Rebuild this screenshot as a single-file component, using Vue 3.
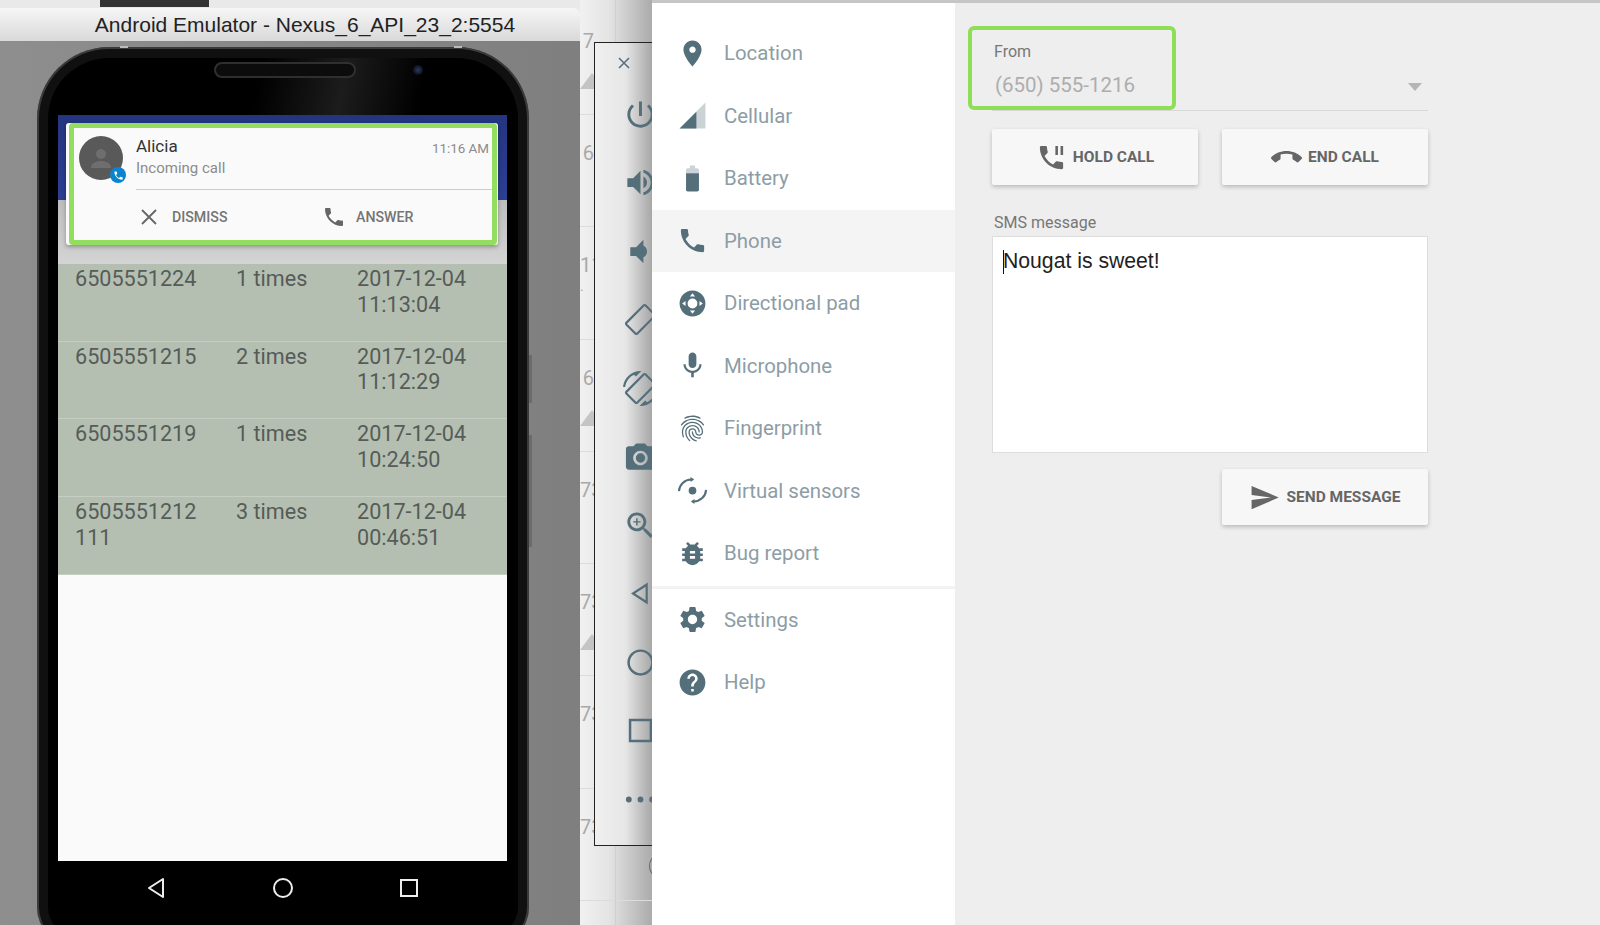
<script setup>
const phonePath = 'M6.62 10.79c1.44 2.83 3.76 5.14 6.59 6.59l2.2-2.2c.27-.27.67-.36 1.02-.24 1.12.37 2.33.57 3.57.57.55 0 1 .45 1 1V20c0 .55-.45 1-1 1-9.39 0-17-7.61-17-17 0-.55.45-1 1-1h3.5c.55 0 1 .45 1 1 0 1.25.2 2.45.57 3.57.11.35.03.74-.25 1.02l-2.2 2.2z'

const navItems = [
  { label: 'Location', d: 'M12 2C8.13 2 5 5.13 5 9c0 5.25 7 13 7 13s7-7.75 7-13c0-3.87-3.13-7-7-7zm0 9.5c-1.38 0-2.5-1.12-2.5-2.5s1.12-2.5 2.5-2.5 2.5 1.12 2.5 2.5-1.12 2.5-2.5 2.5z' },
  { label: 'Cellular', d: 'M15 9L2 22h13z', ghost: 'M2 22h20V2z' },
  { label: 'Battery', d: 'M7 8h10v12.67c0 .73-.6 1.33-1.33 1.33H8.33C7.6 22 7 21.4 7 20.67z', ghost: 'M15.67 4H14V2h-4v2H8.33C7.6 4 7 4.6 7 5.33V8h10V5.33C17 4.6 16.4 4 15.67 4z' },
  { label: 'Phone', d: phonePath, active: true },
  { label: 'Directional pad', d: 'M12 2a10 10 0 1 0 0 20 10 10 0 0 0 0-20zm0 6.2a3.8 3.8 0 1 1 0 7.6 3.8 3.8 0 0 1 0-7.6zM12 4l2 2.6h-4zM12 20l-2-2.6h4zM4 12l2.6-2v4zM20 12l-2.6 2v-4z' },
  { label: 'Microphone', d: 'M12 14c1.66 0 3-1.34 3-3V5c0-1.66-1.34-3-3-3S9 3.34 9 5v6c0 1.66 1.34 3 3 3zm5.3-3c0 3-2.54 5.1-5.3 5.1S6.7 14 6.7 11H5c0 3.41 2.72 6.23 6 6.72V21h2v-3.28c3.28-.48 6-3.3 6-6.72h-1.7z' },
  { label: 'Fingerprint', d: 'M17.81 4.47c-.08 0-.16-.02-.23-.06C15.66 3.42 14 3 12.01 3c-1.98 0-3.86.47-5.57 1.41-.24.13-.54.04-.68-.2-.13-.24-.04-.55.2-.68C7.82 2.52 9.86 2 12.01 2c2.13 0 3.99.47 6.03 1.52.25.13.34.43.21.67-.09.18-.26.28-.44.28zM3.5 9.72c-.1 0-.2-.03-.29-.09-.23-.16-.28-.47-.12-.7.99-1.4 2.25-2.5 3.75-3.27C9.98 4.04 14 4.03 17.15 5.65c1.5.77 2.76 1.86 3.75 3.25.16.22.11.54-.12.7-.23.16-.54.11-.7-.12-.9-1.26-2.04-2.25-3.39-2.94-2.87-1.47-6.54-1.47-9.4.01-1.36.7-2.5 1.7-3.4 2.96-.08.14-.23.21-.39.21zm6.25 12.07c-.13 0-.26-.05-.35-.15-.87-.87-1.34-1.43-2.01-2.64-.69-1.23-1.05-2.73-1.05-4.34 0-2.97 2.54-5.39 5.66-5.39s5.66 2.42 5.66 5.39c0 .28-.22.5-.5.5s-.5-.22-.5-.5c0-2.42-2.09-4.39-4.66-4.39-2.57 0-4.66 1.97-4.66 4.39 0 1.44.32 2.77.93 3.85.64 1.15 1.08 1.64 1.85 2.42.19.2.19.51 0 .71-.11.1-.24.15-.37.15zm7.17-1.85c-1.19 0-2.24-.3-3.1-.89-1.49-1.01-2.38-2.65-2.38-4.39 0-.28.22-.5.5-.5s.5.22.5.5c0 1.41.72 2.74 1.94 3.56.71.48 1.54.71 2.54.71.24 0 .64-.03 1.04-.1.27-.05.53.13.58.41.05.27-.13.53-.41.58-.57.11-1.07.12-1.21.12zM14.91 22c-.04 0-.09-.01-.13-.02-1.59-.44-2.63-1.03-3.72-2.1-1.4-1.39-2.17-3.24-2.17-5.22 0-1.62 1.38-2.94 3.08-2.94 1.7 0 3.08 1.32 3.08 2.94 0 1.07.93 1.94 2.08 1.94s2.08-.87 2.08-1.94c0-3.77-3.25-6.83-7.25-6.83-2.84 0-5.44 1.58-6.61 4.03-.39.81-.59 1.76-.59 2.8 0 .78.07 2.01.67 3.61.1.26-.03.55-.29.64-.26.1-.55-.04-.64-.29-.49-1.31-.73-2.61-.73-3.96 0-1.2.23-2.29.68-3.24 1.33-2.79 4.28-4.6 7.51-4.6 4.55 0 8.25 3.51 8.25 7.83 0 1.62-1.38 2.94-3.08 2.94s-3.08-1.32-3.08-2.94c0-1.07-.93-1.94-2.08-1.94s-2.08.87-2.08 1.94c0 1.71.66 3.31 1.87 4.51.95.94 1.86 1.46 3.27 1.85.27.07.42.35.35.61-.05.23-.26.38-.47.38z' },
  { label: 'Virtual sensors', d: 'M12 9a3 3 0 1 1 0 6 3 3 0 0 1 0-6zM10.500 1.500l2.800 2-2.800 2zM13.500 22.500l-2.800-2 2.800-2z', strokes: 'M1.500 12.500A9.500 9.500 0 0 1 11 3.500M22.500 11.500A9.500 9.500 0 0 1 13 20.500' },
  { label: 'Bug report', d: 'M20 8h-2.810c-.45-.78-1.070-1.450-1.820-1.960L17 4.410 15.590 3l-2.170 2.170C12.960 5.060 12.490 5 12 5c-.49 0-.96.060-1.410.170L8.410 3 7 4.410l1.620 1.630C7.880 6.550 7.260 7.220 6.810 8H4v2h2.090c-.05.33-.09.66-.09 1v1H4v2h2v1c0 .34.040.67.090 1H4v2h2.810c1.040 1.790 2.970 3 5.190 3s4.150-1.210 5.190-3H20v-2h-2.090c.05-.33.090-.66.090-1v-1h2v-2h-2v-1c0-.34-.04-.67-.09-1H20V8zm-6 8h-4v-2h4v2zm0-4h-4v-2h4v2z' }
]

const navBottom = [
  { label: 'Settings', d: 'M19.140 12.940c.04-.3.060-.61.060-.94 0-.32-.02-.64-.07-.94l2.030-1.580c.18-.14.23-.41.120-.61l-1.920-3.320c-.12-.22-.37-.29-.59-.22l-2.390.96c-.5-.38-1.030-.7-1.620-.94l-.36-2.540c-.04-.24-.24-.41-.48-.41h-3.840c-.24 0-.43.17-.47.41l-.36 2.540c-.59.24-1.130.57-1.620.94l-2.390-.96c-.22-.08-.47 0-.59.22L2.740 8.870c-.12.21-.08.47.12.61l2.030 1.580c-.05.3-.09.63-.09.94s.02.64.07.94l-2.030 1.580c-.18.14-.23.41-.12.61l1.920 3.320c.12.22.37.29.59.22l2.390-.96c.5.38 1.030.7 1.620.94l.36 2.540c.05.24.24.41.48.41h3.840c.24 0 .44-.17.47-.41l.36-2.540c.59-.24 1.130-.56 1.620-.94l2.390.96c.22.08.47 0 .59-.22l1.920-3.320c.12-.22.07-.47-.12-.61l-2.010-1.580zM12 15.600c-1.980 0-3.600-1.620-3.600-3.600s1.620-3.600 3.600-3.600 3.600 1.620 3.600 3.600-1.620 3.600-3.600 3.600z' },
  { label: 'Help', d: 'M12 2C6.480 2 2 6.480 2 12s4.480 10 10 10 10-4.480 10-10S17.520 2 12 2zm1 17h-2v-2h2v2zm2.070-7.750l-.9.920C13.450 12.900 13 13.500 13 15h-2v-.5c0-1.100.45-2.100 1.170-2.830l1.240-1.260c.37-.36.59-.86.59-1.410 0-1.100-.9-2-2-2s-2 .9-2 2H8c0-2.210 1.790-4 4-4s4 1.790 4 4c0 .88-.36 1.680-.93 2.250z' }
]

const calls = [
  { num: '6505551224', times: '1 times', date: '2017-12-04 11:13:04' },
  { num: '6505551215', times: '2 times', date: '2017-12-04 11:12:29' },
  { num: '6505551219', times: '1 times', date: '2017-12-04 10:24:50' },
  { num: '6505551212111', times: '3 times', date: '2017-12-04 00:46:51' }
]

// the sheet behind the emulator, only the ends of its numbers show
const backRows = [
  { text: '7', mark: true }, { text: '6' }, { text: '11', dot: true }, { text: '6', mark: true },
  { text: '73' }, { text: '73', mark: true }, { text: '73' }, { text: '73' }
]

const tools = [
  { d: 'M13 3h-2v10h2V3zm4.830 2.170l-1.420 1.420C17.990 7.860 19 9.810 19 12c0 3.870-3.130 7-7 7s-7-3.130-7-7c0-2.190 1.010-4.140 2.580-5.420L6.170 5.170C4.230 6.820 3 9.260 3 12c0 4.970 4.030 9 9 9s9-4.030 9-9c0-2.740-1.230-5.180-3.170-6.830z' },
  { d: 'M3 9v6h4l5 5V4L7 9H3zm13.500 3c0-1.770-1.020-3.290-2.500-4.030v8.050c1.480-.73 2.500-2.250 2.500-4.020zM14 3.230v2.060c2.890.86 5 3.540 5 6.710s-2.110 5.850-5 6.710v2.060c4.010-.91 7-4.490 7-8.770s-2.990-7.860-7-8.770z' },
  { d: 'M5 9v6h4l5 5V4L9 9H5zm11.500 3c0-1.770-1.020-3.290-2.500-4.030v8.050c1.480-.73 2.500-2.250 2.500-4.020z' },
  { d: 'M10.230 1.750c-.59-.59-1.540-.59-2.120 0L1.750 8.110c-.59.590-.59 1.540 0 2.120l12.020 12.020c.59.590 1.540.59 2.120 0l6.360-6.360c.59-.59.590-1.540 0-2.120L10.230 1.750zm4.600 19.440L2.810 9.170l6.360-6.360 12.020 12.020-6.360 6.360z', flip: true },
  { d: 'M16.480 2.520c3.270 1.550 5.610 4.720 5.970 8.480h1.500C23.440 4.840 18.290 0 12 0l-.66.030 3.810 3.810 1.330-1.320zm-6.250-.77c-.59-.59-1.540-.59-2.120 0L1.750 8.110c-.59.590-.59 1.540 0 2.120l12.020 12.020c.59.590 1.540.59 2.120 0l6.360-6.360c.59-.59.590-1.540 0-2.120L10.230 1.750zm4.600 19.440L2.810 9.170l6.360-6.360 12.020 12.020-6.360 6.360zm-7.310.29C4.250 19.940 1.910 16.760 1.550 13H.05C.56 19.160 5.710 24 12 24l.66-.03-3.810-3.810-1.330 1.320z', flip: true },
  { d: 'M9 3L7.170 5H4c-1.100 0-2 .9-2 2v12c0 1.100.9 2 2 2h16c1.100 0 2-.9 2-2V7c0-1.100-.9-2-2-2h-3.170L15 3H9zm3 15c-2.760 0-5-2.240-5-5s2.240-5 5-5 5 2.240 5 5-2.240 5-5 5zm0-8.200a3.200 3.200 0 1 0 0 6.400 3.200 3.200 0 0 0 0-6.400z' },
  { d: 'M15.500 14h-.79l-.28-.27C15.410 12.590 16 11.110 16 9.500 16 5.910 13.090 3 9.500 3S3 5.910 3 9.500 5.910 16 9.500 16c1.610 0 3.090-.59 4.230-1.570l.27.28v.79l5 4.990L20.490 19l-4.990-5zm-6 0C7.010 14 5 11.990 5 9.500S7.010 5 9.500 5 14 7.010 14 9.500 11.990 14 9.500 14zM10 7H9v2H7v1h2v2h1v-2h2V9h-2z' },
  { d: 'M17 4.500v15L5.500 12zM15.500 7.300L8.300 12l7.200 4.700z' },
  { d: 'M12 3a9 9 0 1 0 0 18 9 9 0 0 0 0-18zm0 1.700a7.300 7.300 0 1 1 0 14.600 7.300 7.300 0 0 1 0-14.600z' },
  { d: 'M4 4h16v16H4zm1.700 1.700v12.600h12.600V5.700z' },
  { d: 'M4 10a2 2 0 1 0 0 4 2 2 0 0 0 0-4zm8 0a2 2 0 1 0 0 4 2 2 0 0 0 0-4zm8 0a2 2 0 1 0 0 4 2 2 0 0 0 0-4z' }
]
</script>

<template>
  <div class="desktop">
    <div class="emu-window">
      <div class="top-strip"><div class="top-tab"></div></div>
      <div class="titlebar">Android Emulator - Nexus_6_API_23_2:5554</div>
      <div class="emu-body">
        <div class="phone">
          <i class="tick tick-l"></i><i class="tick tick-r"></i>
          <i class="side-btn side-a"></i><i class="side-btn side-b"></i>
          <div class="speaker"></div>
          <div class="camera"></div>
          <div class="screen">
            <div class="app-bar"></div>
            <div class="app-sub"></div>
            <div class="call-row" v-for="c in calls" :key="c.num">
              <div class="c-num">{{ c.num }}</div>
              <div>{{ c.times }}</div>
              <div class="c-date">{{ c.date }}</div>
            </div>

            <div class="notif">
              <div class="avatar">
                <svg viewBox="0 0 44 44" class="avatar-svg">
                  <circle cx="22" cy="22" r="22" fill="#595959" />
                  <circle cx="22" cy="18" r="5" fill="#6e6e6e" />
                  <path d="M12 32c0-5 5-7 10-7s10 2 10 7z" fill="#6e6e6e" />
                </svg>
                <span class="badge">
                  <svg viewBox="0 0 24 24"><path :d="phonePath" fill="#fff" /></svg>
                </span>
              </div>
              <div class="notif-main">
                <div class="notif-head">
                  <span class="notif-name">Alicia</span>
                  <span class="notif-time">11:16 AM</span>
                </div>
                <div class="notif-sub">Incoming call</div>
                <div class="notif-actions">
                  <div class="act act-dismiss">
                    <svg viewBox="0 0 20 20" class="act-x"><path d="M3 3l14 14M17 3L3 17" stroke="#666" stroke-width="1.800" fill="none" /></svg>
                    <span>DISMISS</span>
                  </div>
                  <div class="act">
                    <svg viewBox="0 0 24 24" class="act-phone"><path :d="phonePath" fill="#666" /></svg>
                    <span>ANSWER</span>
                  </div>
                </div>
              </div>
              <div class="ring"></div>
            </div>
          </div>
          <div class="softkeys">
            <svg viewBox="0 0 24 24"><path d="M18 3v18L4 12z" fill="none" stroke="#eee" stroke-width="2" stroke-linejoin="round" /></svg>
            <svg viewBox="0 0 24 24"><circle cx="12" cy="12" r="9" fill="none" stroke="#eee" stroke-width="2" /></svg>
            <svg viewBox="0 0 24 24"><rect x="4" y="4" width="16" height="16" fill="none" stroke="#eee" stroke-width="2" /></svg>
          </div>
        </div>
      </div>
    </div>

    <div class="backdrop">
      <div class="back-row" v-for="(r, i) in backRows" :key="i">
        <div class="back-num">{{ r.text }}</div>
        <div class="back-dot" v-if="r.dot">.</div>
        <svg v-if="r.mark" viewBox="0 0 24 24" class="back-mark"><path d="M0 20L12 4l12 16z" fill="#c4c4c4" /></svg>
      </div>
      <div class="back-vline"></div>
      <div class="back-arc"></div>
      <div class="toolbar">
        <svg viewBox="0 0 14 14" class="tool-close"><path d="M2 2l10 10M12 2L2 12" stroke="#546e7a" stroke-width="1.500" fill="none" /></svg>
        <svg v-for="(t, i) in tools" :key="i" viewBox="0 0 24 24" class="tool" :class="{ flip: t.flip }"><path :d="t.d" fill="#546e7a" fill-rule="evenodd" /></svg>
      </div>
    </div>

    <div class="panel">
      <nav class="side">
        <div v-for="item in navItems" :key="item.label" class="nav-item" :class="{ active: item.active }">
          <svg viewBox="0 0 24 24" class="nav-icon">
            <path v-if="item.ghost" :d="item.ghost" fill="#546e7a" opacity=".3" />
            <path v-if="item.strokes" :d="item.strokes" fill="none" stroke="#546e7a" stroke-width="1.600" />
            <path :d="item.d" fill="#546e7a" />
          </svg>
          <span>{{ item.label }}</span>
        </div>
        <div class="nav-sep"></div>
        <div v-for="item in navBottom" :key="item.label" class="nav-item">
          <svg viewBox="0 0 24 24" class="nav-icon"><path :d="item.d" fill="#546e7a" /></svg>
          <span>{{ item.label }}</span>
        </div>
      </nav>

      <section class="content">
        <div class="ring-from"></div>
        <div class="form">
          <div class="field-label">From</div>
          <div class="select">
            <span>(650) 555-1216</span>
            <i class="caret-down"></i>
          </div>
          <div class="btn-row">
            <button class="btn">
              <svg viewBox="0 0 24 24"><path d="M17 3h-2v7h2V3zm3 12.500c-1.250 0-2.450-.2-3.570-.57-.35-.11-.74-.03-1.020.24l-2.200 2.200c-2.830-1.440-5.150-3.750-6.590-6.590l2.200-2.210c.28-.26.36-.65.25-1C8.700 6.450 8.500 5.250 8.500 4c0-.55-.45-1-1-1H4c-.55 0-1 .45-1 1 0 9.390 7.610 17 17 17 .55 0 1-.45 1-1v-3.500c0-.55-.45-1-1-1zM19 3v7h2V3h-2z" fill="#666" /></svg>
              HOLD CALL
            </button>
            <button class="btn">
              <svg viewBox="0 0 24 24"><path d="M12 9c-1.600 0-3.150.25-4.600.72v3.100c0 .39-.23.74-.56.9-.98.49-1.870 1.120-2.660 1.850-.18.18-.43.28-.7.28-.28 0-.53-.11-.71-.29L.29 13.080c-.18-.17-.29-.42-.29-.7 0-.28.11-.53.29-.71C3.340 8.780 7.460 7 12 7s8.660 1.780 11.710 4.670c.18.18.29.43.29.71 0 .28-.11.53-.29.71l-2.480 2.480c-.18.18-.43.29-.71.29-.27 0-.52-.11-.7-.28-.79-.74-1.690-1.360-2.670-1.850-.33-.16-.56-.5-.56-.9v-3.100C15.150 9.250 13.600 9 12 9z" fill="#666" /></svg>
              END CALL
            </button>
          </div>
          <div class="field-label sms-label">SMS message</div>
          <div class="sms-box"><span class="text-caret"></span>Nougat is sweet!</div>
          <div class="send-row">
            <button class="btn">
              <svg viewBox="0 0 24 24" class="send-icon"><path d="M2.010 21L23 12 2.010 3 2 10l15 2-15 2z" fill="#666" /></svg>
              SEND MESSAGE
            </button>
          </div>
        </div>
      </section>
    </div>
  </div>
</template>

<style>
html, body { margin: 0; overflow: hidden; background: #eee; }
</style>

<style scoped>
.desktop {
  display: flex; width: 1600px; height: 925px; overflow: hidden;
  font-family: Roboto, "Liberation Sans", sans-serif;
}

/* emulator window */
.emu-window { width: 580px; flex: none; display: flex; flex-direction: column; background: #e9e9e9; }
.top-strip { height: 8px; flex: none; }
.top-tab { width: 109px; height: 7px; margin-left: 100px; background: #333; }
.titlebar {
  height: 33px; flex: none; border-radius: 0 7px 0 0; background: linear-gradient(#f6f6f6, #d9d9d9);
  font: 21px/33px "Liberation Sans", sans-serif; color: #222; text-align: center; padding-left: 30px;
}
.emu-body { flex: 1; background: linear-gradient(90deg, #8e8e8e, #7f7f7f); padding: 6px 0 0 37px; overflow: hidden; }

.phone {
  position: relative; box-sizing: border-box; width: 492px; height: 900px;
  padding: 68px 22px 0 21px; border-radius: 72px 72px 40px 40px;
  background: #000 linear-gradient(100deg, #000 45%, #1c1c1c 62%, #000 78%) no-repeat 0 0 / 100% 68px;
  box-shadow: inset 0 0 0 2px #3a3a3a, inset 0 0 0 11px #101010;
}
.tick { position: absolute; top: -1px; width: 8px; height: 2px; background: #bbb; }
.tick-l { left: 83px; }
.tick-r { left: 417px; }
.side-btn { position: absolute; right: -3px; width: 3px; background: #6b6b6b; }
.side-a { top: 308px; height: 48px; }
.side-b { top: 388px; height: 112px; }
.speaker {
  position: absolute; left: 177px; top: 15px; width: 142px; height: 16px; box-sizing: border-box;
  border-radius: 8px; background: #0c0c0c; border: 2px solid #2f2f2f;
}
.camera { position: absolute; left: 376px; top: 18px; width: 10px; height: 10px; border-radius: 50%; background: radial-gradient(#2b3a63, #0a0a12 80%); }

.screen { position: relative; height: 746px; background: #fafafa; }
.app-bar { height: 85px; background: linear-gradient(#243580, #2c3f93); }
.app-sub { height: 64px; background: linear-gradient(#bdbdbd, #d4d4d4); }
.call-row {
  display: grid; grid-template-columns: 161px 121px 1fr; box-sizing: border-box; height: 77.700px;
  padding: 2px 0 0 17px; background: #b4bfb2; border-bottom: 1.500px solid #c6cec4;
  font-size: 21.6px; line-height: 25.5px; color: #565c58;
}
.c-num { width: 125px; word-break: break-all; }
.c-date { width: 125px; }

.notif {
  position: absolute; left: 8px; top: 8px; width: 432px; height: 122px; box-sizing: border-box;
  display: flex; padding: 13px 5px 0 13px; background: #fafafa; border-radius: 3px;
  box-shadow: 0 2px 4px rgba(0, 0, 0, .3);
}
.ring { position: absolute; left: 3px; top: 0; right: 1px; bottom: 0; border: 5px solid #93dd60; border-radius: 4px; }
.avatar { position: relative; width: 44px; height: 44px; flex: none; }
.avatar-svg { display: block; width: 44px; height: 44px; }
.badge {
  position: absolute; left: 31px; top: 31px; width: 16px; height: 16px; border-radius: 50%;
  background: #0b84cf; display: flex; align-items: center; justify-content: center;
}
.badge svg { width: 11px; height: 11px; }
.notif-main { flex: 1; margin-left: 13px; padding-top: 2px; }
.notif-head { display: flex; justify-content: space-between; align-items: center; height: 20px; padding-right: 4px; }
.notif-name { font-size: 17px; color: #333; margin-bottom: 4px; }
.notif-time { font-size: 13.4px; color: #8a8a8a; }
.notif-sub { font-size: 15px; line-height: 20px; color: #8c8c8c; padding-bottom: 11px; border-bottom: 1px solid #ccc; }
.notif-actions { display: flex; align-items: center; height: 54px; font-size: 14.2px; font-weight: 500; color: #757575; }
.act { display: flex; align-items: center; }
.act-dismiss { width: 186px; padding-left: 3px; box-sizing: border-box; gap: 13px; }
.act-x { width: 20px; height: 20px; }
.act-phone { width: 24px; height: 24px; margin-right: 10px; }

.softkeys { display: flex; justify-content: center; gap: 102px; padding-top: 15px; }
.softkeys svg { width: 24px; height: 24px; }

/* sheet and tool strip behind the extended controls */
.backdrop { position: relative; width: 72px; flex: none; overflow: hidden; background: linear-gradient(90deg, #f1f1f1, #e4e4e4 40%, #ababab); }
.back-row {
  box-sizing: border-box; height: 112.300px; padding: 26px 58px 0 0; text-align: right;
  border-bottom: 1px solid #dcdcdc; font-size: 20px; line-height: 24px; color: #a9a9a9;
}
.back-row:first-child { margin-top: 2.700px; }
.back-dot { line-height: 18px; font-size: 14px; padding-right: 16px; }
.back-mark { display: block; width: 24px; height: 24px; margin: 16px 0 0 auto; }
.back-vline { position: absolute; left: 35px; top: 0; bottom: 0; width: 1px; background: #cfcfcf; }
.back-arc { position: absolute; left: 69px; top: 856px; width: 12px; height: 18px; border: 1.500px solid #666; border-radius: 50%; }
.toolbar {
  position: absolute; left: 14px; top: 42px; width: 70px; height: 804px; box-sizing: border-box;
  border: 1px solid #222; padding: 13px 0 0 28px;
  display: flex; flex-direction: column; gap: 33.500px;
  background: linear-gradient(90deg, #f0f0f0, #e6e6e6 45%, #a5a5a5 85%);
}
.tool-close { width: 14px; height: 14px; margin: 0 0 -7px -6px; flex: none; }
.tool { width: 35px; height: 35px; flex: none; }
.tool.flip { transform: scaleX(-1); }

/* extended controls panel */
.panel { flex: 1; display: flex; border-top: 3px solid #c6c6c6; background: #eee; }
.side { width: 303px; flex: none; background: #fff; padding-top: 19px; }
.nav-item {
  display: flex; align-items: center; height: 62.500px; padding-left: 25px;
  font-size: 20.4px; color: #8d9da6;
}
.nav-item.active { background: #f4f4f5; }
.nav-icon { width: 31px; height: 31px; margin-right: 16px; flex: none; }
.nav-sep { height: 3px; margin: 1px 0 0; background: #f3f3f3; }

.content { position: relative; flex: 1; padding: 41px 0 0 37px; }
.ring-from {
  position: absolute; left: 13px; top: 23px; width: 208px; height: 84px; box-sizing: border-box;
  border: 4px solid #8ede58; border-radius: 6px;
}
.form { width: 436px; }
.field-label { font-size: 16px; line-height: 16px; color: #777; padding-left: 2px; }
.select {
  display: flex; justify-content: space-between; align-items: center; height: 41px; margin-top: 10px;
  padding: 0 6px 10px 3px; box-sizing: border-box; border-bottom: 1px solid #d8d8d8;
  font-size: 20.5px; color: #adadad;
}
.caret-down { width: 0; height: 0; border: 7.500px solid transparent; border-top: 8px solid #b5b5b5; border-bottom: 0; margin-top: 4px; }
.btn-row { display: flex; justify-content: space-between; margin-top: 18px; }
.btn {
  display: flex; align-items: center; justify-content: center; gap: 6px; width: 206px; height: 56px;
  border: 0; border-radius: 2px; background: #f7f7f7; box-shadow: 0 2px 4px rgba(0, 0, 0, .22);
  font: 700 15.500px Roboto, sans-serif; color: #666;
}
.btn svg { width: 31px; height: 31px; }
.sms-label { line-height: 18px; margin-top: 29px; }
.sms-box {
  box-sizing: border-box; height: 217px; margin-top: 4px; padding: 11px 10px; background: #fff; border: 1px solid #ddd;
  font: 21.2px/26px "Liberation Sans", sans-serif; color: #222; position: relative;
}
.text-caret { position: absolute; left: 10px; top: 13px; width: 1px; height: 24px; background: #111; }
.send-row { display: flex; justify-content: flex-end; margin-top: 16px; }
</style>
